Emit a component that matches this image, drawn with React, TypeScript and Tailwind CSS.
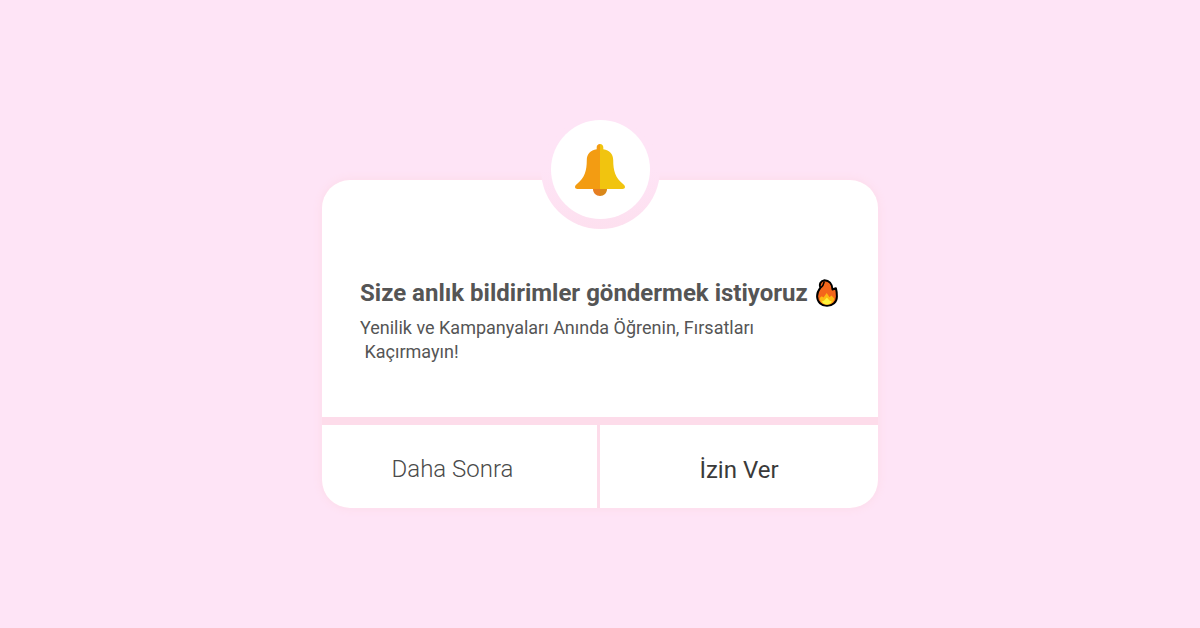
function BellIcon() {
  return (
    <svg viewBox="0 0 50 52" className="h-[52px] w-[50px]" aria-hidden="true">
      <path d="M18 45h7v7c-4 0-7-3-7-7z" fill="#e67e22" />
      <path d="M25 45h7c0 4-3 7-7 7z" fill="#d9881a" />
      <path
        d="M25 0c-2 0-3.300 1.300-3.300 3.200v2C15.500 6 11.800 10 11.800 16c0 11-2.300 18-9.300 23.500C.8 40.800 0 41.800 0 43c0 1.300 1 2 2.600 2H25z"
        fill="#f39c12"
      />
      <path
        d="M25 0c2 0 3.300 1.300 3.300 3.200v2C34.500 6 38.200 10 38.200 16c0 11 2.300 18 9.300 23.500 1.700 1.300 2.500 2.300 2.500 3.500 0 1.300-1 2-2.600 2H25z"
        fill="#f1c40f"
      />
    </svg>
  );
}

function FireIcon() {
  return (
    <svg viewBox="0 0 22 28" className="h-7 w-[22px]" aria-hidden="true">
      <path
        d="M8.500 1.200c4.300.2 7.800 3.300 8 9.300 1.200-.4 2.300-1 3.400-1.200.9 3 1 5.400 1 8.200 0 5.700-4.300 9.300-9.900 9.300S1.100 23 1.100 17.300c0-3.800 1.400-6.300 3.200-8.500C3 6 4 2 8.500 1.200z"
        fill="#f4661b"
        stroke="#000"
        strokeWidth="2"
        strokeLinejoin="round"
      />
      <path
        d="M8.200 2.500C7.600 5 7.500 7 5 8.600"
        fill="none"
        stroke="#000"
        strokeWidth="1.500"
      />
      <path
        d="M3.600 19l2.200-1.800 1.700 1.300 3.200-4.500 2.800 4.300 2-1.800 2.700 3c-.3 3.800-3.200 6.200-7.200 6.200s-7-2.500-7.400-6.700z"
        fill="#fdb913"
      />
      <path
        d="M6 22.500l2.200-1 2.700-3 2.500 3 2.300 1c-1 2-2.600 3-4.800 3s-4-1-4.900-3z"
        fill="#fff33b"
      />
    </svg>
  );
}

export default function App() {
  return (
    <main className="flex min-h-screen items-center justify-center bg-[#fee4f6] px-4 font-['Roboto',sans-serif]">
      <div className="relative w-full max-w-[556px] pt-[60px]">
        <section className="overflow-hidden rounded-[28px] bg-[#fddcea] shadow-[0_0_8px_1px_#fddcea]">
          <div className="bg-white px-[38px] pt-[97px] pb-[53px] text-[#555555]">
            <h1 className="flex items-center gap-2 text-2xl leading-8 font-bold">
              Size anlık bildirimler göndermek istiyoruz
              <FireIcon />
            </h1>
            <p className="mt-[7px] text-lg leading-6">
              Yenilik ve Kampanyaları Anında Öğrenin, Fırsatları
              <br />
              &nbsp;Kaçırmayın!
            </p>
          </div>
          <div className="mt-2 grid grid-cols-[275fr_278fr] gap-[3px] text-2xl leading-8">
            <button
              type="button"
              className="bg-white pt-7 pr-[30px] pb-[23px] pl-4 font-light text-[#4a4a4a]"
            >
              Daha Sonra
            </button>
            <button
              type="button"
              className="bg-white px-4 pt-[29px] pb-[22px] text-[#3a3a3a]"
            >
              İzin Ver
            </button>
          </div>
        </section>
        {/* badge sits in a notch that fades into the page colour */}
        <div className="absolute inset-x-0 -top-2.5 flex justify-center">
          <div className="rounded-full bg-linear-to-b from-[#fee4f6] from-50% to-[#fde0ef] p-2.5">
            <div className="flex size-[99px] items-center justify-center rounded-full bg-white">
              <BellIcon />
            </div>
          </div>
        </div>
      </div>
    </main>
  );
}
